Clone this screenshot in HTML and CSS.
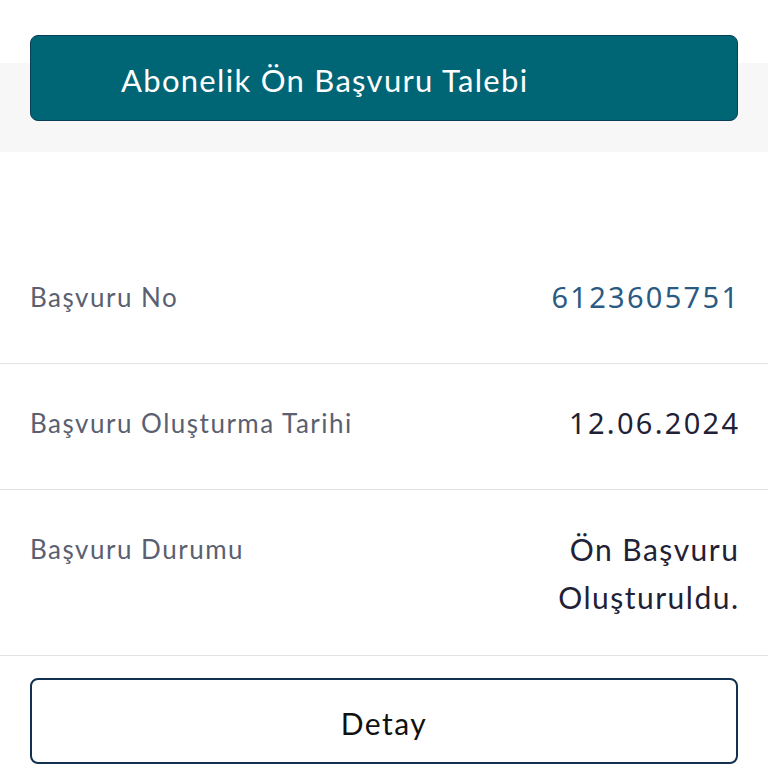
FILE: index.html
```html
<!DOCTYPE html>
<html lang="tr">
<head>
    <meta charset="UTF-8">
    <meta name="viewport" content="width=device-width, initial-scale=1.0">
    <title>Başvuru Detayı</title>
    <link rel="stylesheet" href="styles.css">
</head>
<body>

    <div class="header">
        <button class="title-button">Abonelik Ön Başvuru Talebi</button>
    </div>

    <div class="info-list">
        <div class="info-row">
            <div class="label">Başvuru No</div>
            <div class="value number link">6123605751</div>
        </div>
        <div class="info-row">
            <div class="label">Başvuru Oluşturma Tarihi</div>
            <div class="value number">12.06.2024</div>
        </div>
        <div class="info-row">
            <div class="label">Başvuru Durumu</div>
            <div class="value">Ön Başvuru Oluşturuldu.</div>
        </div>
    </div>

    <div class="actions">
        <button class="detail-button">Detay</button>
    </div>

</body>
</html>
```

FILE: styles.css
```css
body {
    margin: 0;
    font-family: Lato, "Noto Sans", sans-serif;
    background-color: #fff;
    color: #1f2236;
}
.header {
    background: linear-gradient(#fff 63px, #f7f7f8 63px);
    padding: 35px 30px 31px;
}
.title-button {
    display: block;
    width: 100%;
    height: 86px;
    background-color: #006574;
    border: 1px solid #0b3e58;
    border-radius: 8px;
    color: #fff;
    font-family: Lato, sans-serif;
    font-size: 31px;
    letter-spacing: 1.3px;
    text-align: left;
    padding: 4px 0 0 90px;
}
.info-list {
    margin-top: 86px;
}
.info-row {
    display: flex;
    justify-content: space-between;
    align-items: flex-start;
    box-sizing: border-box;
    min-height: 126px;
    padding: 35px 30px 34px;
    border-bottom: 1px solid #e2e2e6;
}
.label {
    font-size: 26px;
    letter-spacing: 1.5px;
    line-height: 48px;
    color: #5a6070;
}
.value {
    max-width: 210px;
    margin-right: -1.5px;
    font-size: 30px;
    letter-spacing: 1.5px;
    line-height: 48px;
    text-align: right;
    color: #1f2236;
}
.number {
    font-family: "Noto Sans", sans-serif;
    font-size: 29px;
    letter-spacing: 2.3px;
    margin-right: -2.3px;
    max-width: none;
}
.link {
    color: #2b5a82;
}
.actions {
    padding: 22px 30px 0;
}
.detail-button {
    display: block;
    width: 100%;
    height: 86px;
    background-color: #fff;
    border: 2px solid #12304f;
    border-radius: 8px;
    font-family: Lato, sans-serif;
    font-size: 30px;
    letter-spacing: 1.5px;
    padding-top: 4px;
    color: #111;
}
```
